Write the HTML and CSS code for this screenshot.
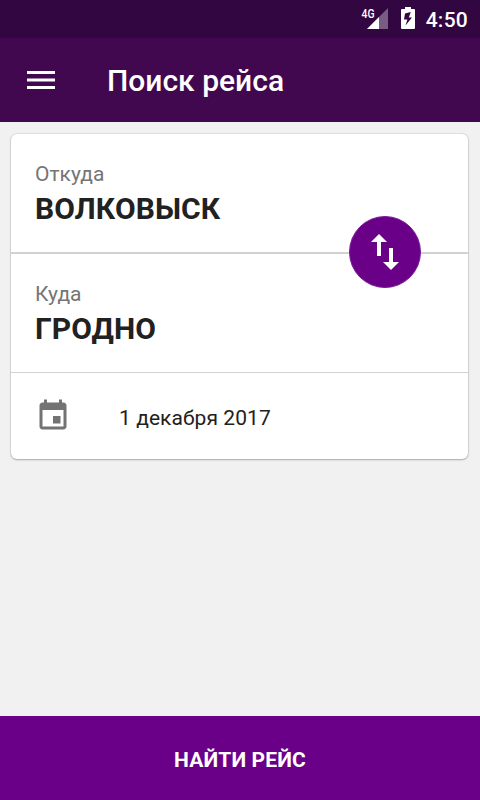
FILE: index.html
```html
<!DOCTYPE html>
<html lang="ru">
<head>
  <meta charset="UTF-8">
  <meta name="viewport" content="width=device-width, initial-scale=1.0">
  <title>Поиск рейса</title>
  <link rel="stylesheet" href="styles.css">
</head>
<body>
  <div class="status-bar">
    <svg class="signal" width="28" height="24" viewBox="0 0 28 24">
      <path d="M27 2V23H6z" fill="#fff" fill-opacity="0.35"/>
      <path d="M18 11V23H6z" fill="#fff"/>
      <text class="network" x="0.5" y="11.500" textLength="13" lengthAdjust="spacingAndGlyphs">4G</text>
    </svg>
    <svg class="battery" width="14" height="22" viewBox="0 0 14 22">
      <path fill="#fff" fill-rule="evenodd" d="M4 0h6v2h3q1 0 1 1v18q0 1-1 1H1q-1 0-1-1V3q0-1 1-1h3zM9.800 5L4 6.500L3 12.500h3.400L4.500 18.500L11 10.500H7.800z"/>
    </svg>
    <span class="time">4:50</span>
  </div>

  <header class="app-bar">
    <svg class="menu-icon" width="36" height="36" viewBox="0 0 36 36">
      <path fill="#fff" d="M4 9h28v3H4zM4 16.500h28v3H4zM4 24h28v3H4z"/>
    </svg>
    <h1 class="title">Поиск рейса</h1>
  </header>

  <main class="content">
    <div class="card">
      <div class="place from">
        <div class="label">Откуда</div>
        <div class="city">ВОЛКОВЫСК</div>
      </div>
      <div class="place to">
        <div class="label">Куда</div>
        <div class="city">ГРОДНО</div>
      </div>
      <div class="date">
        <svg class="date-icon" width="36" height="36" viewBox="0 0 24 24">
          <path fill="#737373" d="M17 12h-5v5h5v-5zM16 1v2H8V1H6v2H5c-1.110 0-1.990.9-1.990 2L3 19c0 1.100.890 2 2 2h14c1.100 0 2-.9 2-2V5c0-1.100-.9-2-2-2h-1V1h-2zm3 18H5V8h14v11z"/>
        </svg>
        <span class="date-text">1 декабря 2017</span>
      </div>
      <button class="swap" aria-label="Поменять местами">
        <svg width="48" height="48" viewBox="0 0 24 24">
          <path fill="#fff" d="M16 17.010V10h-2v7.010h-3L15 21l4-3.990h-3zM9 3L5 6.990h3V14h2V6.990h3L9 3z"/>
        </svg>
      </button>
    </div>
  </main>

  <button class="search-button">НАЙТИ РЕЙС</button>
</body>
</html>
```

FILE: styles.css
```css
* {
  margin: 0;
  padding: 0;
  box-sizing: border-box;
}

body {
  display: flex;
  flex-direction: column;
  height: 100vh;
  background-color: #f1f1f1;
  font-family: Roboto, "Noto Sans", sans-serif;
  color: #212121;
  overflow: hidden;
}

button {
  border: none;
  font-family: inherit;
  cursor: pointer;
}

svg {
  display: block;
  flex-shrink: 0;
}

/* Status bar */
.status-bar {
  display: flex;
  justify-content: flex-end;
  height: 38px;
  padding-right: 12px;
  background-color: #320640;
  color: #fff;
}

.signal {
  margin-top: 6px;
}

.network {
  font-size: 13px;
  font-weight: 500;
  fill: #fff;
}

.battery {
  margin: 7px 11px 0 12px;
}

.time {
  font-size: 21px;
  font-weight: 500;
  line-height: 24px;
  padding-top: 8px;
  letter-spacing: 0.25px;
}

/* App bar */
.app-bar {
  display: flex;
  align-items: center;
  height: 84px;
  padding-left: 23px;
  background-color: #41074f;
  color: #fff;
}

.title {
  margin-left: 48px;
  padding-top: 2px;
  font-size: 30px;
  font-weight: 500;
  line-height: 36px;
}

/* Card */
.content {
  flex: 1;
  padding: 12px 12px 0 11px;
}

.card {
  position: relative;
  height: 325px;
  background-color: #fff;
  border-radius: 6px;
  box-shadow: 0 0 1px 1px rgba(0, 0, 0, 0.07), 0 1px 2px rgba(0, 0, 0, 0.25);
}

.place {
  padding: 26px 24px 0;
}

.from {
  height: 120px;
  border-bottom: 2px solid #d2d2d2;
}

.to {
  height: 119px;
  border-bottom: 1px solid #d2d2d2;
}

.label {
  font-size: 21px;
  line-height: 28px;
  color: #757575;
}

.city {
  padding-top: 1px;
  font-size: 30px;
  font-weight: 700;
  line-height: 40px;
  letter-spacing: 0.1px;
}

.date {
  display: flex;
  padding: 25px 24px 0;
}

.date-text {
  margin: 7px 0 0 48px;
  font-size: 21px;
  line-height: 26px;
  letter-spacing: 0.07px;
}

/* Swap button, sits over the divider */
.swap {
  position: absolute;
  top: 82px;
  right: 47px;
  display: flex;
  justify-content: center;
  align-items: center;
  width: 72px;
  height: 72px;
  border: 1px solid #7b1a96;
  border-radius: 50%;
  background-color: #6a0088;
}

/* Footer */
.search-button {
  height: 84px;
  padding-top: 4px;
  background-color: #6a0088;
  color: #fff;
  font-size: 21px;
  font-weight: 700;
  letter-spacing: 0.15px;
}
```
